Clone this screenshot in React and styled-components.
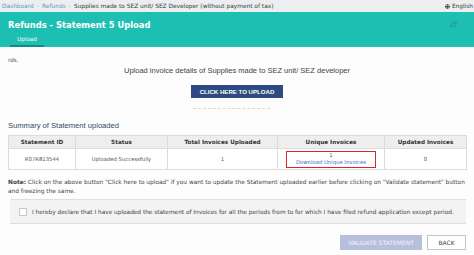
import React from "react";
import styled, { createGlobalStyle } from "styled-components";
import { RefreshCw } from "lucide-react";
import { FaGlobe } from "react-icons/fa";

const columns = [
  { key: "id", label: "Statement ID", width: 67 },
  { key: "status", label: "Status", width: 92 },
  { key: "total", label: "Total Invoices Uploaded", width: 110 },
  { key: "unique", label: "Unique Invoices", width: 107 },
  { key: "updated", label: "Updated Invoices", width: 82 },
];

const row = {
  id: "R07R813544",
  status: "Uploaded Successfully",
  total: "1",
  unique: "1",
  updated: "0",
};

const GlobalStyle = createGlobalStyle`
  html, body {
    margin: 0;
    padding: 0;
    background: #fff;
    font-family: "DejaVu Sans", Verdana, sans-serif;
  }
`;

const Page = styled.div`
  width: 474px;
  height: 255px;
  overflow: hidden;
  background: #fdfdfd;
`;

const Crumbs = styled.div`
  height: 12px;
  background: #eceef0;
  display: flex;
  align-items: center;
  padding: 0 1px 0 2px;
  font-size: 5.85px;
  color: #444;
  white-space: nowrap;
  overflow: hidden;
`;

const Crumb = styled.span`
  color: ${(p) => (p.$link ? "#5a9acb" : "#3a3a3a")};
`;

const Sep = styled.span`
  color: #bbb;
  margin: 0 3px;
`;

const Lang = styled.span`
  margin-left: auto;
  display: flex;
  align-items: center;
  gap: 2px;
  color: #333;
`;

const Header = styled.div`
  height: 35px;
  background: #1ebfb3;
  display: flex;
  flex-direction: column;
  padding: 0 0 0 8px;
  position: relative;
  box-sizing: border-box;
`;

const Title = styled.div`
  margin-top: 7px;
  height: 12px;
  line-height: 12px;
  font-size: 8.4px;
  font-weight: bold;
  color: #fff;
`;

const Tab = styled.div`
  margin-top: 2px;
  width: 34px;
  margin-left: 2px;
  height: 14px;
  box-sizing: border-box;
  text-align: center;
  font-size: 5.6px;
  line-height: 12px;
  color: #f2fffd;
  border-bottom: 2px solid #0f8c84;
`;

const Refresh = styled.div`
  position: absolute;
  right: 17px;
  top: 9px;
  color: #2a7fa0;
  display: flex;
`;

const Content = styled.div`
  padding: 9px 8px 0 8px;
  display: flex;
  flex-direction: column;
`;

const Clip = styled.div`
  height: 8px;
  line-height: 8px;
  font-size: 5.6px;
  color: #555;
`;

const Lead = styled.div`
  margin-top: 3px;
  height: 8px;
  line-height: 8px;
  text-align: center;
  font-family: "Liberation Sans", Arial, sans-serif;
  font-size: 7.5px;
  color: #444;
`;

const UploadButton = styled.button`
  margin: 10px auto 0 auto;
  width: 92px;
  height: 13px;
  padding: 0;
  border: none;
  background: #2d4b80;
  color: #fff;
  font-family: "Liberation Sans", Arial, sans-serif;
  font-weight: bold;
  font-size: 6.1px;
`;

const Dashes = styled.div`
  margin: 10px 0 0 185px;
  width: 77px;
  border-top: 1px dashed #f6d2a8;
`;

const Summary = styled.div`
  margin-top: 12px;
  height: 10px;
  line-height: 10px;
  font-family: "Liberation Sans", Arial, sans-serif;
  font-size: 7.6px;
  color: #2f4a6a;
`;

const Table = styled.table`
  margin-top: 4px;
  border-collapse: collapse;
  table-layout: fixed;
  width: 458px;
`;

const Th = styled.th`
  height: 12px;
  padding: 0;
  background: #eeeeee;
  border: 1px solid #dcdcdc;
  color: #333;
  font-size: 5.7px;
  font-weight: bold;
  text-align: center;
`;

const Td = styled.td`
  height: 20px;
  padding: 0;
  background: #fff;
  border: 1px solid #dcdcdc;
  color: #555;
  font-size: 5.3px;
  text-align: center;
`;

const Marked = styled.div`
  margin: 0 8px;
  border: 1.5px solid #d8262c;
  height: 17px;
  box-sizing: border-box;
  display: flex;
  flex-direction: column;
  justify-content: center;
  line-height: 7px;
`;

const DownloadLink = styled.a`
  color: #3c6fc2;
  text-decoration: none;
`;

const Note = styled.div`
  margin-top: 8px;
  font-size: 5.85px;
  line-height: 9px;
  color: #444;
  white-space: nowrap;
`;

const Declaration = styled.label`
  margin-top: 3px;
  margin-left: 2px;
  height: 25px;
  box-sizing: border-box;
  background: #f3f3f3;
  border-top: 1px solid #dedede;
  border-bottom: 1px solid #dedede;
  display: flex;
  align-items: center;
  padding-left: 9px;
  gap: 5px;
  font-size: 5.8px;
  color: #444;
  white-space: nowrap;
`;

const Box = styled.span`
  width: 6px;
  height: 6px;
  background: #fff;
  border: 1px solid #c8c8c8;
  flex: none;
`;

const Actions = styled.div`
  margin-top: 11px;
  display: flex;
  justify-content: flex-end;
  gap: 5px;
`;

const ActionButton = styled.button`
  height: 15px;
  padding: 0;
  width: ${(p) => p.$w}px;
  font-family: "DejaVu Sans", Verdana, sans-serif;
  font-size: 6px;
  background: ${(p) => (p.$primary ? "#b6bfdc" : "#fff")};
  color: ${(p) => (p.$primary ? "#f4f6fc" : "#444")};
  border: 1px solid ${(p) => (p.$primary ? "#b6bfdc" : "#c4c4c4")};
`;

export default function App() {
  return (
    <Page>
      <GlobalStyle />
      <Crumbs>
        <Crumb $link>Dashboard</Crumb>
        <Sep>›</Sep>
        <Crumb $link>Refunds</Crumb>
        <Sep>›</Sep>
        <Crumb>Supplies made to SEZ unit/ SEZ Developer (without payment of tax)</Crumb>
        <Lang>
          <FaGlobe size={5} color="#333" />
          English
        </Lang>
      </Crumbs>

      <Header>
        <Title>Refunds - Statement 5 Upload</Title>
        <Tab>Upload</Tab>
        <Refresh>
          <RefreshCw size={7} strokeWidth={2} />
        </Refresh>
      </Header>

      <Content>
        <Clip>rds.</Clip>
        <Lead>Upload invoice details of Supplies made to SEZ unit/ SEZ developer</Lead>
        <UploadButton>CLICK HERE TO UPLOAD</UploadButton>
        <Dashes />
        <Summary>Summary of Statement uploaded</Summary>

        <Table>
          <colgroup>
            {columns.map((c) => (
              <col key={c.key} style={{ width: c.width }} />
            ))}
          </colgroup>
          <thead>
            <tr>
              {columns.map((c) => (
                <Th key={c.key}>{c.label}</Th>
              ))}
            </tr>
          </thead>
          <tbody>
            <tr>
              {columns.map((c) =>
                c.key === "unique" ? (
                  <Td key={c.key}>
                    <Marked>
                      <span>{row.unique}</span>
                      <DownloadLink href="#">Download Unique Invoices</DownloadLink>
                    </Marked>
                  </Td>
                ) : (
                  <Td key={c.key}>{row[c.key]}</Td>
                )
              )}
            </tr>
          </tbody>
        </Table>

        <Note>
          <b>Note:</b> Click on the above button "Click here to upload" if you want to update the Statement uploaded earlier before clicking on "Validate statement" button
          <br />
          and freezing the same.
        </Note>

        <Declaration>
          <Box />
          I hereby declare that I have uploaded the statement of Invoices for all the periods from to for which I have filed refund application except period.
        </Declaration>

        <Actions>
          <ActionButton $primary $w={82}>VALIDATE STATEMENT</ActionButton>
          <ActionButton $w={39}>BACK</ActionButton>
        </Actions>
      </Content>
    </Page>
  );
}
